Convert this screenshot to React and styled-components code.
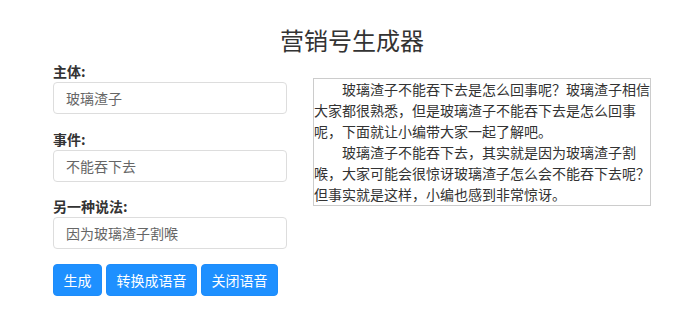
import styled, { createGlobalStyle } from "styled-components";

const GlobalStyle = createGlobalStyle`
    body {
        margin: 0;
        background: #fff;
        font-family: "Noto Sans CJK SC", "Noto Sans", sans-serif;
        color: #333;
    }
`;

const fields = [
    { label: "主体:", value: "玻璃渣子" },
    { label: "事件:", value: "不能吞下去" },
    { label: "另一种说法:", value: "因为玻璃渣子割喉" },
];

const paragraphs = [
    "玻璃渣子不能吞下去是怎么回事呢？玻璃渣子相信大家都很熟悉，但是玻璃渣子不能吞下去是怎么回事呢，下面就让小编带大家一起了解吧。",
    "玻璃渣子不能吞下去，其实就是因为玻璃渣子割喉，大家可能会很惊讶玻璃渣子怎么会不能吞下去呢？但事实就是这样，小编也感到非常惊讶。",
];

function App() {
    return (
        <>
            <GlobalStyle />
            <Page>
                <Title>营销号生成器</Title>
                <Row>
                    <FormColumn>
                        {fields.map((field) => (
                            <Field key={field.label}>
                                <Label>{field.label}</Label>
                                <Input defaultValue={field.value} />
                            </Field>
                        ))}
                        <Buttons>
                            <Button>生成</Button>
                            <Button>转换成语音</Button>
                            <Button>关闭语音</Button>
                        </Buttons>
                    </FormColumn>
                    <Article>
                        {paragraphs.map((text, index) => (
                            <Paragraph key={index}>{text}</Paragraph>
                        ))}
                    </Article>
                </Row>
            </Page>
        </>
    );
}

export default App;

const Page = styled.div`
    width: 598px;
    padding: 27px 0 0 53px;
`;

const Title = styled.h3`
    margin: 0 0 8px;
    font-size: 24px;
    line-height: 26px;
    font-weight: 400;
    text-align: center;
    color: #333;
`;

const Row = styled.div`
    display: flex;
    align-items: flex-start;
    gap: 26px;
`;

const FormColumn = styled.div`
    width: 234px;
`;

const Field = styled.div`
    margin-bottom: 14.5px;
`;

const Label = styled.label`
    display: block;
    margin-bottom: 1px;
    font-size: 14px;
    line-height: 20px;
    font-weight: 700;
    color: #333;
`;

const Input = styled.input`
    display: block;
    box-sizing: border-box;
    width: 100%;
    height: 32px;
    padding: 0 12px;
    border: 1px solid #ddd;
    border-radius: 4px;
    font-family: inherit;
    font-size: 14px;
    color: #666;
    outline: none;
`;

const Buttons = styled.div`
    display: flex;
    gap: 4px;
`;

const Button = styled.button`
    height: 32px;
    padding: 0 9.5px;
    border: 1px solid #1e8cfa;
    border-radius: 4px;
    background: #1e90ff;
    color: #fff;
    font-family: inherit;
    font-size: 14px;
    cursor: pointer;
`;

const Article = styled.div`
    width: 336px;
    margin-top: 17px;
    border: 1px solid #ccc;
    font-size: 14px;
    line-height: 21px;
    color: #333;
`;

const Paragraph = styled.p`
    margin: 0;
    text-indent: 2em;
`;
